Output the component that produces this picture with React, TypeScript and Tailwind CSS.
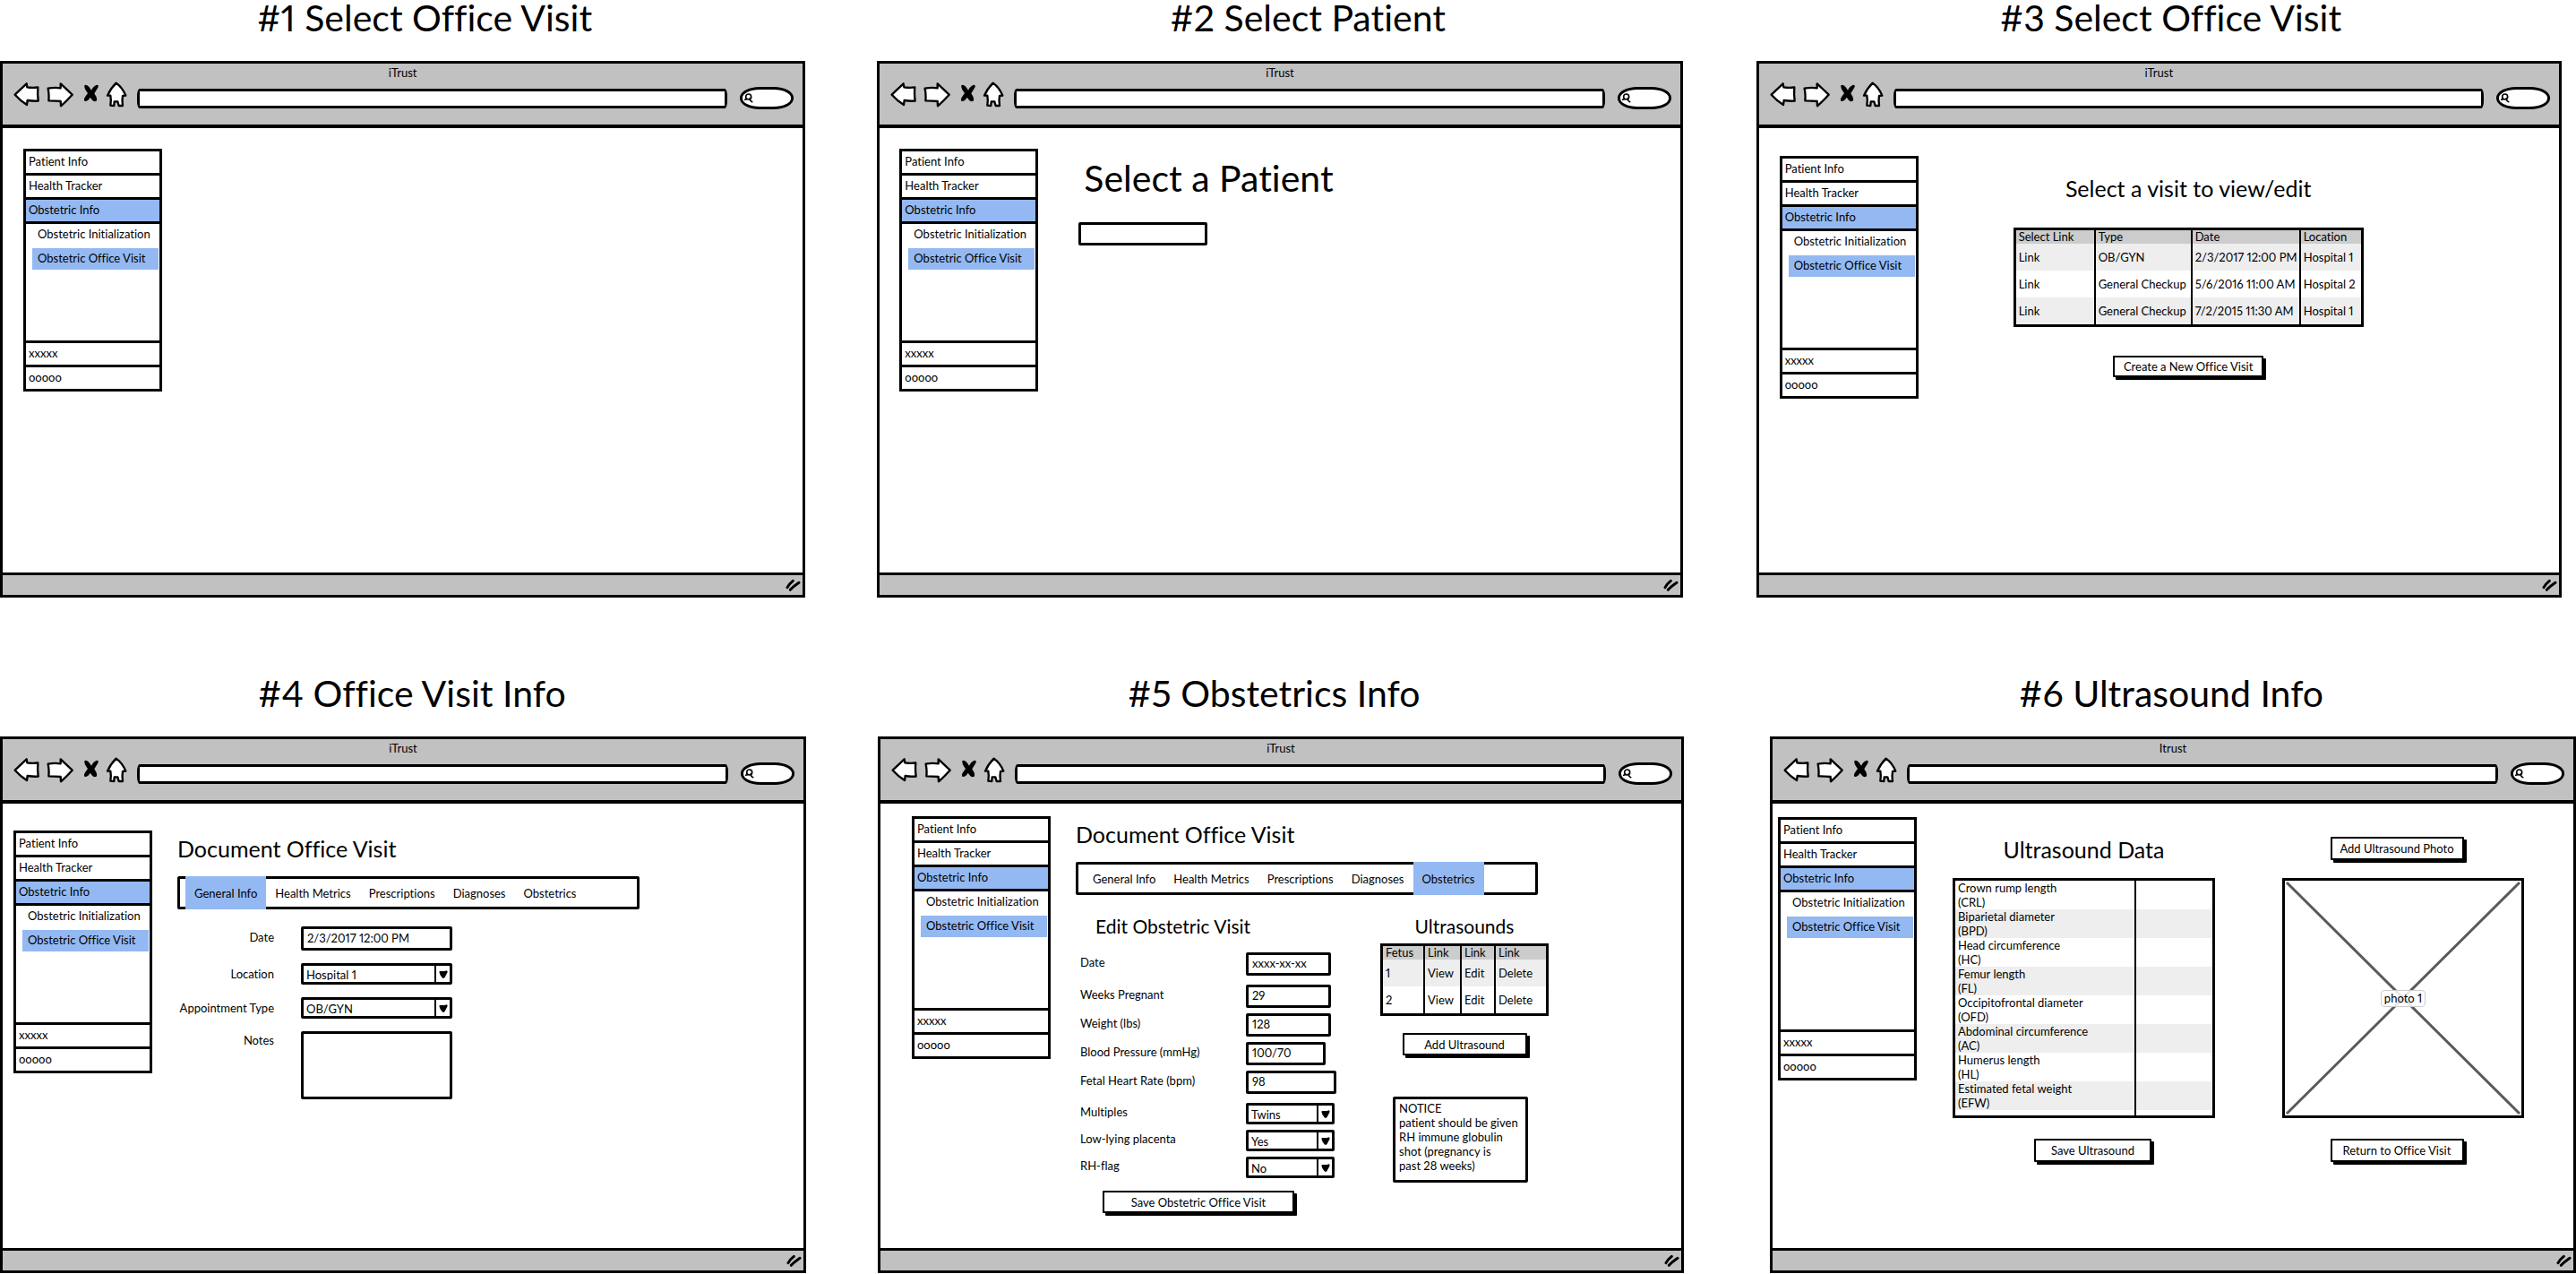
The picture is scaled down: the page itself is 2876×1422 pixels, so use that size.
import { useId, type ReactNode } from "react";

const boxed = "border-[3px] border-black bg-white rounded-[2px]";

/* ---------- Browser frame ---------- */

function NavIcon({ label, box, children, width }: { label: string; box: string; children: ReactNode; width: string }) {
  return (
    <button type="button" aria-label={label} className={"shrink-0 " + width}>
      <svg viewBox={box} className="block h-[31px] w-full" fill="white" stroke="black" strokeWidth="7" strokeLinejoin="round" strokeLinecap="round">
        {children}
      </svg>
    </button>
  );
}

function BrowserBar({ title }: { title: string }) {
  return (
    <header className="h-[72px] border-b-4 border-black bg-[#c1c1c1]">
      <p className="pt-[2px] text-center leading-4">{title}</p>
      <div className="flex items-center gap-2 pr-[10px] pl-[11px]">
        <NavIcon label="Back" box="42 88 90 93" width="w-[30px]">
          <path d="M50 135 L89 98 L91 110 Q110 113 127 110 Q125 134 128 156 Q110 157 92 154 L90 169 Q68 155 50 135Z" />
        </NavIcon>
        <NavIcon label="Forward" box="156 88 90 93" width="w-[30px]">
          <path d="M161 114 Q182 110 203 113 L203 98 L242 135 Q222 157 204 173 L203 157 Q182 155 163 155 Q165 135 161 114Z" />
        </NavIcon>
        <NavIcon label="Stop" box="270 88 60 93" width="w-5">
          <path d="M283 104 Q290 98 299 110 L306 120 Q312 106 324 102 Q332 102 328 111 L316 131 Q328 148 323 156 Q314 160 309 153 L302 144 Q294 158 284 157 Q279 152 285 143 L294 130 Q281 113 283 104Z" fill="black" stroke="none" />
        </NavIcon>
        <NavIcon label="Home" box="354 88 72 93" width="w-6">
          <path d="M389 96 Q370 115 360 138 L370 138 Q373 155 370 171 L382 172 L383 158 L394 158 L398 172 L411 172 Q408 155 411 139 L421 138 Q410 111 389 96Z" />
        </NavIcon>
        <input
          type="text"
          aria-label="Address"
          className="mt-2 ml-[3px] h-[22px] min-w-0 flex-1 rounded-[3px/8px] border-[3px] border-black bg-white px-1 outline-none"
        />
        <label className="mt-2 ml-[6px] flex h-[25px] w-[60px] shrink-0 items-center rounded-[22px/12px] border-[3px] border-black bg-white pl-[2px]">
          <svg viewBox="0 0 30 33" className="h-[11px] w-[10px] shrink-0" fill="none" stroke="black" strokeWidth="5" strokeLinecap="round" aria-hidden="true">
            <circle cx="14" cy="12" r="9" />
            <path d="M7 20 L2 22 M18 18 Q20 27 26 29" />
          </svg>
          <input type="text" aria-label="Search" className="min-w-0 flex-1 bg-transparent outline-none" />
        </label>
      </div>
    </header>
  );
}

function Screen({
  heading,
  headingPad,
  margin,
  title = "iTrust",
  children,
}: {
  heading: string;
  headingPad: string;
  margin: string;
  title?: string;
  children: ReactNode;
}) {
  return (
    <section className={"flex min-w-0 flex-1 flex-col " + margin}>
      <h2 className={"h-[68px] text-[41px] leading-[40px] whitespace-nowrap " + headingPad}>{heading}</h2>
      <div className="flex min-h-[599px] flex-col border-[3px] border-black bg-white">
        <BrowserBar title={title} />
        <div className="flex flex-1 items-start">{children}</div>
        <footer className="flex h-[25px] items-center justify-end border-t-[3px] border-black bg-[#c1c1c1] pr-[2px]">
          <svg viewBox="0 0 51 42" className="h-[14px] w-[17px]" fill="none" stroke="black" strokeWidth="9" strokeLinecap="round" aria-hidden="true">
            <path d="M6 29 Q12 17 25 7 M16 37 Q26 26 45 13" />
          </svg>
        </footer>
      </div>
    </section>
  );
}

/* ---------- Shared controls ---------- */

function Sidebar({ place, panel = "h-[133px]" }: { place: string; panel?: string }) {
  const row = "flex h-[27px] items-center border-b-[3px] border-black pl-[3px] pb-[2px]";
  return (
    <nav aria-label="Sections" className={"w-[155px] shrink-0 border-x-[3px] border-t-[3px] border-black bg-white whitespace-nowrap " + place}>
      <a href="#patient" className={row}>Patient Info</a>
      <a href="#tracker" className={row}>Health Tracker</a>
      <a href="#obstetric" className={row + " bg-[#94b9f2]"}>Obstetric Info</a>
      <div className={"flex flex-col gap-[3px] border-b-[3px] border-black pr-[1px] pl-[7px] " + panel}>
        <a href="#initialization" className="flex h-6 items-center pb-[2px] pl-[6px]">Obstetric Initialization</a>
        <a href="#office-visit" className="flex h-6 items-center bg-[#94b9f2] pb-[2px] pl-[6px]">Obstetric Office Visit</a>
      </div>
      <a href="#x" className={row}>xxxxx</a>
      <a href="#o" className={row}>ooooo</a>
    </nav>
  );
}

function Button({ size, children }: { size: string; children: ReactNode }) {
  return (
    <button type="button" className={"rounded-[1px] border-2 border-black bg-white whitespace-nowrap shadow-[3px_3px_0_#000] " + size}>
      {children}
    </button>
  );
}

function TextBox({ id, value, size }: { id: string; value: string; size: string }) {
  return <input id={id} type="text" defaultValue={value} className={boxed + " px-[4px] pb-[2px] outline-none " + size} />;
}

function Select({ id, value, width }: { id: string; value: string; width: string }) {
  return (
    <div className={boxed + " flex h-6 " + width}>
      <select id={id} defaultValue={value} className="min-w-0 flex-1 appearance-none pb-[2px] pl-[3px] outline-none">
        <option>{value}</option>
      </select>
      <span className="flex w-[17px] items-center justify-center border-l-2 border-black" aria-hidden="true">
        <svg viewBox="0 0 30 27" className="h-[9px] w-[10px]">
          <path d="M1 5 Q2 2 8 3 L20 3 L25 1 Q29 2 29 6 Q25 14 19 25 Q15 28 11 25 Q3 17 1 5Z" />
        </svg>
      </span>
    </div>
  );
}

const tabNames = ["General Info", "Health Metrics", "Prescriptions", "Diagnoses", "Obstetrics"];

function Tabs({ active }: { active: string }) {
  return (
    <div role="tablist" className="mt-[17px] flex h-[37px] w-[516px] items-stretch rounded-[2px] border-[3px] border-black pl-[6px] whitespace-nowrap">
      {tabNames.map((name) => (
        <button
          key={name}
          type="button"
          role="tab"
          aria-selected={name === active}
          className={"-my-[3px] px-[10px] " + (name === active ? "bg-[#94b9f2]" : "")}
        >
          {name}
        </button>
      ))}
    </div>
  );
}

/* ---------- Tables ---------- */

function LinkTable({ head, rows, cols, width }: { head: string[]; rows: string[][]; cols: string[]; width: string }) {
  const links = ["Link", "View", "Edit", "Delete"];
  return (
    <table className={"table-fixed border-separate border-spacing-0 border-[3px] border-black text-left whitespace-nowrap " + width}>
      <colgroup>
        {cols.map((c, i) => (
          <col key={i} className={c} />
        ))}
      </colgroup>
      <thead className="bg-[#ccc]">
        <tr className="h-[15px] leading-[15px]">
          {head.map((h, i) => (
            <th key={i} scope="col" className="border-black p-0 pl-[3px] font-normal not-first:border-l-2">{h}</th>
          ))}
        </tr>
      </thead>
      <tbody>
        {rows.map((r, i) => (
          <tr key={i} className="h-[30px] odd:bg-[#eee]">
            {r.map((cell, j) => (
              <td key={j} className="border-black p-0 pl-[3px] not-first:border-l-2">
                {links.includes(cell) ? <a href="#visit">{cell}</a> : cell}
              </td>
            ))}
          </tr>
        ))}
      </tbody>
    </table>
  );
}

const measures = [
  ["Crown rump length", "(CRL)"],
  ["Biparietal diameter", "(BPD)"],
  ["Head circumference", "(HC)"],
  ["Femur length", "(FL)"],
  ["Occipitofrontal diameter", "(OFD)"],
  ["Abdominal circumference", "(AC)"],
  ["Humerus length", "(HL)"],
  ["Estimated fetal weight", "(EFW)"],
];

function MeasureTable() {
  return (
    <table className="mt-[18px] w-[293px] table-fixed border-separate border-spacing-0 border-[3px] border-black text-left">
      <colgroup>
        <col className="w-[200px]" />
        <col />
      </colgroup>
      <tbody>
        {measures.map(([name, code]) => (
          <tr key={code} className="h-8 leading-4 even:bg-[#eee]">
            <th scope="row" className="p-0 pl-[3px] font-normal">{name}<br />{code}</th>
            <td className="border-l-2 border-black p-0" />
          </tr>
        ))}
        <tr className="h-[6px]" aria-hidden="true">
          <td className="p-0" />
          <td className="border-l-2 border-black p-0" />
        </tr>
      </tbody>
    </table>
  );
}

/* ---------- Forms ---------- */

function VisitForm() {
  const id = useId();
  return (
    <form className="mt-[19px] grid grid-cols-[108px_169px] items-center gap-x-[30px] gap-y-[14px] whitespace-nowrap">
      <label htmlFor={id + "date"} className="pb-1 text-right">Date</label>
      <TextBox id={id + "date"} value="2/3/2017 12:00 PM" size="h-[27px] w-full" />
      <label htmlFor={id + "loc"} className="text-right">Location</label>
      <Select id={id + "loc"} value="Hospital 1" width="w-full" />
      <label htmlFor={id + "type"} className="text-right">Appointment Type</label>
      <Select id={id + "type"} value="OB/GYN" width="w-full" />
      <label htmlFor={id + "notes"} className="self-start text-right">Notes</label>
      <textarea id={id + "notes"} className={boxed + " h-[76px] w-full resize-none px-[5px] outline-none"} />
    </form>
  );
}

function Field({ label, value, size, select }: { label: string; value: string; size: string; select?: boolean }) {
  const id = useId();
  return (
    <div className="flex items-center">
      <label htmlFor={id} className="w-[190px] pb-1 pl-[5px]">{label}</label>
      {select ? <Select id={id} value={value} width={size} /> : <TextBox id={id} value={value} size={size} />}
    </div>
  );
}

function ObstetricForm() {
  return (
    <form className="mt-4 whitespace-nowrap">
      <Field label="Date" value="xxxx-xx-xx" size="h-[26px] w-[95px]" />
      <div className="mt-[10px] flex flex-col gap-[6px]">
        <Field label="Weeks Pregnant" value="29" size="h-[26px] w-[95px]" />
        <Field label="Weight (lbs)" value="128" size="h-[26px] w-[95px]" />
        <Field label="Blood Pressure (mmHg)" value="100/70" size="h-[26px] w-[89px]" />
        <Field label="Fetal Heart Rate (bpm)" value="98" size="h-[26px] w-[101px]" />
      </div>
      <div className="mt-[10px] flex flex-col gap-[6px]">
        <Field label="Multiples" value="Twins" size="w-[99px]" select />
        <Field label="Low-lying placenta" value="Yes" size="w-[99px]" select />
        <Field label="RH-flag" value="No" size="w-[99px]" select />
      </div>
      <div className="mt-[14px] pl-[30px]">
        <Button size="h-[25px] w-[214px]">Save Obstetric Office Visit</Button>
      </div>
    </form>
  );
}

function Photo() {
  return (
    <figure className="relative mt-[18px] flex h-[268px] w-[270px] items-center justify-center border-[3px] border-black">
      <svg viewBox="0 0 264 262" preserveAspectRatio="none" className="absolute inset-0 h-full w-full" stroke="#5a5a5a" strokeWidth="3" aria-hidden="true">
        <path d="M2 2 L262 260 M262 2 L2 260" />
      </svg>
      <figcaption className="relative rounded-[4px] border border-[#ccc] bg-white/85 px-[3px] leading-[17px]">photo 1</figcaption>
    </figure>
  );
}

/* ---------- Page ---------- */

export default function App() {
  return (
    <main className="w-full bg-white font-[Lato,'Open_Sans',sans-serif] text-[13px] leading-5 text-black proportional-nums [font-variant-ligatures:none]">
      <div className="flex">
        <Screen heading="#1 Select Office Visit" headingPad="pl-[287px]" margin="">
          <Sidebar place="mt-[23px] ml-[23px]" />
        </Screen>

        <Screen heading="#2 Select Patient" headingPad="pl-[327px]" margin="ml-20">
          <Sidebar place="mt-[23px] ml-[22px]" />
          <div className="mt-[34px] ml-[45px]">
            <h3 className="pl-[6px] text-[41px] leading-[44px] whitespace-nowrap">Select a Patient</h3>
            <input type="text" aria-label="Patient" className={boxed + " mt-[27px] h-[26px] w-[144px] px-[5px] outline-none"} />
          </div>
        </Screen>

        <Screen heading="#3 Select Office Visit" headingPad="pl-[272px]" margin="mr-4 ml-[82px]">
          <Sidebar place="mt-[31px] ml-[23px]" />
          <div className="mt-[53px] ml-[106px] flex flex-col items-center">
            <h3 className="mb-[30px] text-[25px] leading-7 whitespace-nowrap">Select a visit to view/edit</h3>
            <LinkTable
              head={["Select Link", "Type", "Date", "Location"]}
              rows={[
                ["Link", "OB/GYN", "2/3/2017 12:00 PM", "Hospital 1"],
                ["Link", "General Checkup", "5/6/2016 11:00 AM", "Hospital 2"],
                ["Link", "General Checkup", "7/2/2015 11:30 AM", "Hospital 1"],
              ]}
              cols={["w-[87px]", "w-[108px]", "w-[121px]", "w-[69px]"]}
              width="w-[391px]"
            />
            <div className="mt-[32px]">
              <Button size="h-[24px] w-[168px]">Create a New Office Visit</Button>
            </div>
          </div>
        </Screen>
      </div>

      <div className="mt-[87px] flex">
        <Screen heading="#4 Office Visit Info" headingPad="pl-[288px]" margin="">
          <Sidebar place="mt-[30px] ml-[12px]" />
          <div className="mt-[36px] ml-[28px]">
            <h3 className="text-[25px] leading-7 whitespace-nowrap">Document Office Visit</h3>
            <Tabs active="General Info" />
            <VisitForm />
          </div>
        </Screen>

        <Screen heading="#5 Obstetrics Info" headingPad="pl-[279px]" margin="ml-20">
          <Sidebar place="mt-[14px] ml-[35px]" />
          <div className="mt-[20px] ml-[28px]">
            <h3 className="text-[25px] leading-7 whitespace-nowrap">Document Office Visit</h3>
            <Tabs active="Obstetrics" />
            <div className="mt-[22px] flex">
              <div className="w-[340px]">
                <h4 className="pl-[22px] text-[21px] leading-[26px] whitespace-nowrap">Edit Obstetric Visit</h4>
                <ObstetricForm />
              </div>
              <div className="flex flex-col items-center">
                <h4 className="mb-[6px] text-[21px] leading-[26px]">Ultrasounds</h4>
                <LinkTable
                  head={["Fetus", "Link", "Link", "Link"]}
                  rows={[
                    ["1", "View", "Edit", "Delete"],
                    ["2", "View", "Edit", "Delete"],
                  ]}
                  cols={["w-[45px]", "w-[41px]", "w-[38px]", "w-[58px]"]}
                  width="w-[188px]"
                />
                <div className="mt-[19px]">
                  <Button size="h-[25px] w-[139px]">Add Ultrasound</Button>
                </div>
                <p className={boxed + " mt-[46px] ml-[14px] h-[96px] w-[151px] self-start py-[2px] pl-[4px] leading-4 whitespace-nowrap"}>
                  NOTICE
                  <br />
                  patient should be given
                  <br />
                  RH immune globulin
                  <br />
                  shot (pregnancy is
                  <br />
                  past 28 weeks)
                </p>
              </div>
            </div>
          </div>
        </Screen>

        <Screen heading="#6 Ultrasound Info" headingPad="pl-[278px]" margin="ml-24" title="Itrust">
          <Sidebar place="mt-[15px] ml-[6px]" panel="h-[156px]" />
          <div className="mt-[37px] ml-[40px] flex gap-[75px]">
            <div className="flex flex-col items-center">
              <h3 className="text-[25px] leading-7 whitespace-nowrap">Ultrasound Data</h3>
              <MeasureTable />
              <div className="mt-[23px] ml-5">
                <Button size="h-[26px] w-[131px]">Save Ultrasound</Button>
              </div>
            </div>
            <div className="flex flex-col items-center">
              <div className="mr-[14px] h-7">
                <Button size="h-[26px] w-[149px]">Add Ultrasound Photo</Button>
              </div>
              <Photo />
              <div className="mt-[23px] mr-[14px]">
                <Button size="h-[26px] w-[149px]">Return to Office Visit</Button>
              </div>
            </div>
          </div>
        </Screen>
      </div>
    </main>
  );
}
